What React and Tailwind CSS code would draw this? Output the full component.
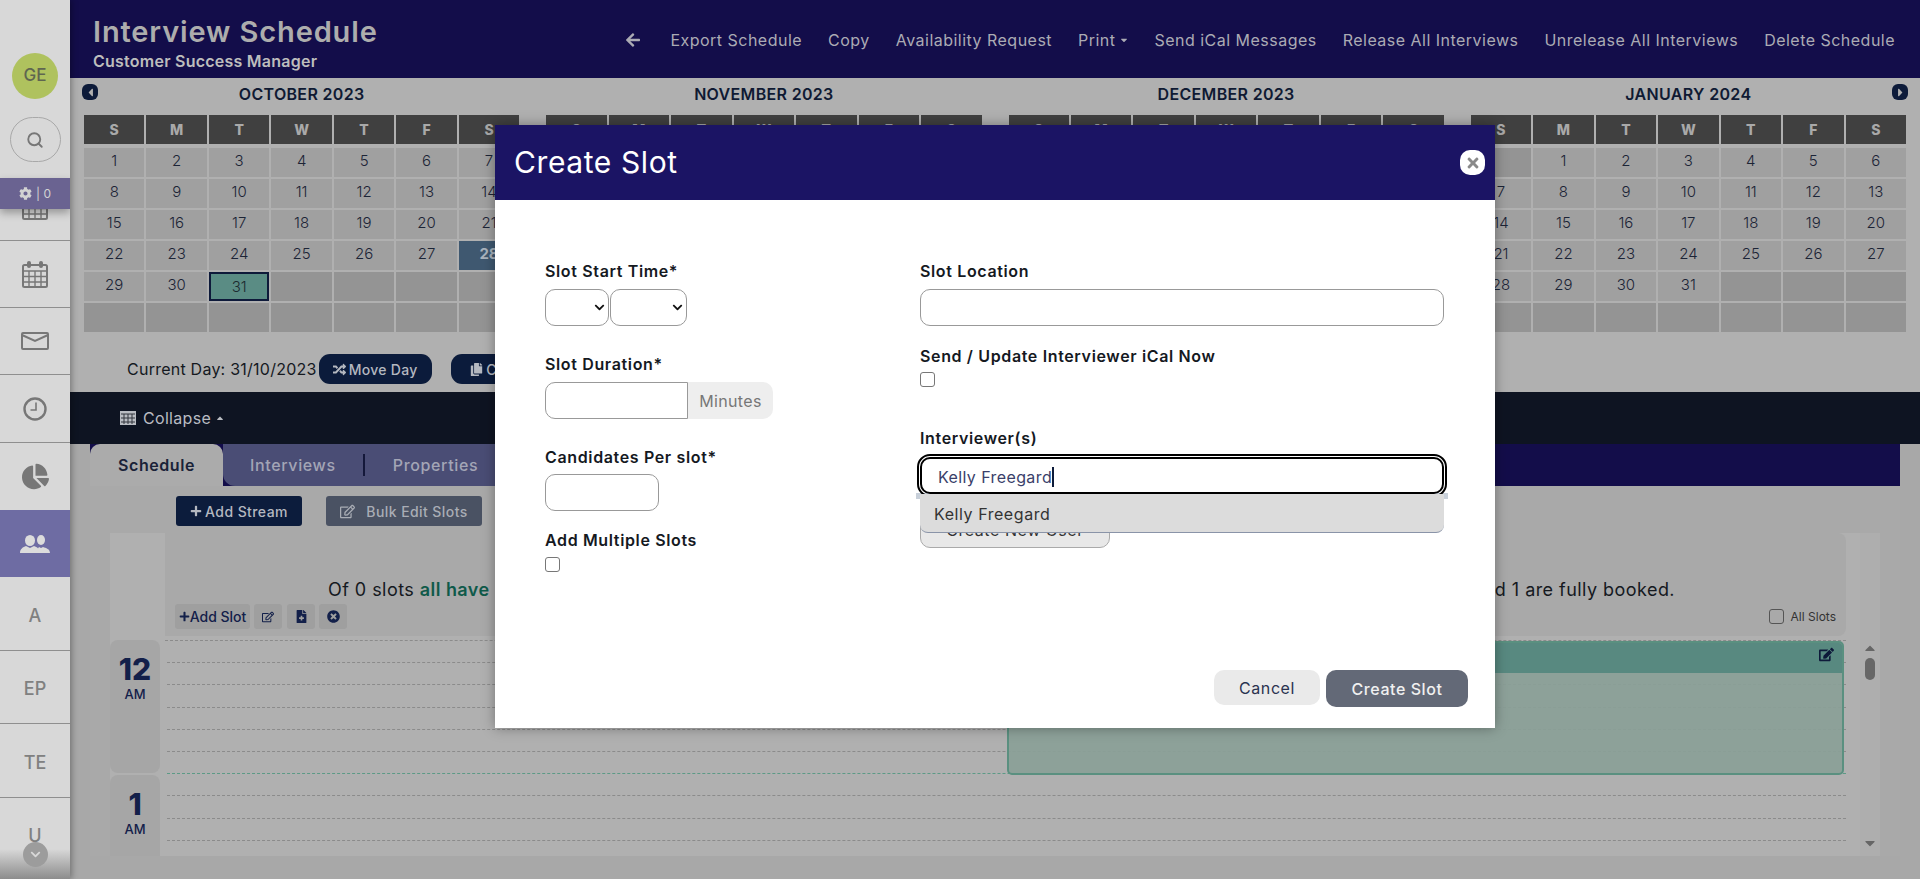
import React from "react";
import {
  FaArrowLeft,
  FaCaretDown,
  FaCaretLeft,
  FaCaretRight,
  FaCaretUp,
  FaChartPie,
  FaChevronDown,
  FaCog,
  FaCopy,
  FaEdit,
  FaFileMedical,
  FaPlus,
  FaRandom,
  FaRegEdit,
  FaTimes,
  FaTimesCircle,
} from "react-icons/fa";
import { Search } from "lucide-react";

const days = ["S", "M", "T", "W", "T", "F", "S"];

// the two middle months sit behind the modal, so their day numbers are left out
const months = [
  { title: "OCTOBER 2023", start: 0, len: 31 },
  { title: "NOVEMBER 2023", start: 3, len: 0 },
  { title: "DECEMBER 2023", start: 5, len: 0 },
  { title: "JANUARY 2024", start: 1, len: 31 },
];

const CalendarIcon = ({ className }) => (
  <svg viewBox="0 0 28 28" className={className} fill="none" stroke="#777" strokeWidth="2">
    <rect x="2" y="5" width="24" height="22" rx="1.5" fill="#d8d8d8" />
    <path d="M2 11h24M2 16.5h24M2 22h24M8 11v16M14 11v16M20 11v16" strokeWidth="1.4" />
    <rect x="6" y="1" width="4" height="7" rx="2" fill="#777" stroke="none" />
    <rect x="18" y="1" width="4" height="7" rx="2" fill="#777" stroke="none" />
  </svg>
);

const MailIcon = () => (
  <svg viewBox="0 0 28 18" className="w-[28px] h-[18px]" fill="none" stroke="#777" strokeWidth="2">
    <rect x="1" y="1" width="26" height="16" rx="1" />
    <path d="M1 3l13 6 13-6" />
  </svg>
);

const ClockIcon = () => (
  <svg viewBox="0 0 24 24" className="w-[24px] h-[24px]" fill="none" stroke="#777" strokeWidth="2.4">
    <circle cx="12" cy="12" r="10.5" />
    <path d="M13 5.5V13H7.5" strokeWidth="1.6" />
  </svg>
);

const PeopleIcon = () => (
  <svg viewBox="0 0 30 18" className="h-[18px] w-[30px]" fill="#dcdcdc">
    <ellipse cx="21" cy="5" rx="4" ry="5" />
    <path d="M17 18c0-3 1-5 2-6l2 1 2-1c3 1 7 2 7 6z" />
    <ellipse cx="10" cy="5.5" rx="5" ry="5.5" />
    <path d="M0 18c0-4 3-6 6-7l4 2 4-2c3 1 6 3 6 7z" />
  </svg>
);

const NavRow = ({ children, className = "h-[67px]" }) => (
  <div className={`flex items-center justify-center border-b border-[#8f8f8f] text-[18px] font-medium text-[#808080] ${className}`}>
    {children}
  </div>
);

const Sidebar = () => (
  <div className="relative z-10 flex h-[879px] w-[70px] shrink-0 flex-col overflow-hidden bg-[#d8d8d8] shadow-[2px_0_6px_rgba(0,0,0,0.3)]">
    <div className="flex h-[178px] flex-col items-center pt-[53px]">
      <div className="flex h-[46px] w-[46px] items-center justify-center rounded-full bg-[#afc25e] text-[17px] font-medium text-[#5f6650]">
        GE
      </div>
      <div className="mt-[18px] flex h-[45px] w-[51px] items-center justify-center rounded-full border border-[#a8a8a8]">
        <Search size={18} strokeWidth={2.5} color="#777" />
      </div>
    </div>
    <div className="relative z-10 flex h-[31px] items-center justify-center gap-[4px] bg-[#6a6391] text-[12px] text-[#d2d2d2] shadow-[0_4px_8px_rgba(0,0,0,0.3)]">
      <FaCog size={13} />
      <span>| 0</span>
    </div>
    <div className="flex h-[32px] justify-center overflow-hidden border-b border-[#8f8f8f]">
      <CalendarIcon className="-mt-[17px] h-[28px] w-[28px]" />
    </div>
    <NavRow>
      <CalendarIcon className="h-[28px] w-[28px]" />
    </NavRow>
    <NavRow>
      <MailIcon />
    </NavRow>
    <NavRow className="h-[68px]">
      <ClockIcon />
    </NavRow>
    <div className="flex h-[67px] items-center justify-center">
      <FaChartPie size={27} color="#777" />
    </div>
    <div className="flex h-[67px] items-center justify-center bg-[#6e6ca3]">
      <PeopleIcon />
    </div>
    <NavRow className="h-[74px] pt-[3px]">A</NavRow>
    <NavRow className="h-[73px] pt-[2px]">EP</NavRow>
    <NavRow className="h-[74px] pt-[3px]">TE</NavRow>
    <div className="flex h-[81px] justify-center pt-[27px] text-[18px] font-medium leading-[22px] text-[#808080]">U</div>
    <div className="absolute bottom-0 left-0 h-[30px] w-full bg-gradient-to-b from-transparent to-[#8c8c8c]" />
    <div className="absolute bottom-[12px] left-[23px] flex h-[25px] w-[25px] items-center justify-center rounded-full bg-[#9c9c9c]">
      <FaChevronDown size={11} color="#d8d8d8" />
    </div>
  </div>
);

const Header = () => (
  <div className="flex h-[78px] items-center justify-between bg-[#130d4a] pl-[23px] pr-[25px] pt-[6px]">
    <div>
      <div className="text-[29px] font-semibold leading-[36px] tracking-[0.03em] text-[#adadad]">Interview Schedule</div>
      <div className="mt-[1px] text-[16px] font-semibold leading-[20px] tracking-[0.015em] text-[#bdbdbd]">Customer Success Manager</div>
    </div>
    <div className="flex items-center gap-[26px] pb-[4px] text-[16px] tracking-[0.03em] text-[#ababb4]">
      <FaArrowLeft size={16} className="mr-[3px]" />
      <span>Export Schedule</span>
      <span>Copy</span>
      <span>Availability Request</span>
      <span className="flex items-center">
        Print
        <FaCaretDown size={10} className="ml-[3px]" />
      </span>
      <span>Send iCal Messages</span>
      <span>Release All Interviews</span>
      <span>Unrelease All Interviews</span>
      <span>Delete Schedule</span>
    </div>
  </div>
);

const Month = ({ month, index }) => {
  const cells = Array.from({ length: 42 }, (_, i) => {
    const n = i - month.start + 1;
    return n >= 1 && n <= month.len ? n : null;
  });
  return (
    <div>
      <div className="relative flex h-[37px] items-center justify-center pb-[6px] text-[16px] font-semibold tracking-[0.02em] text-[#0f1a33]">
        {index === 0 && (
          <span className="absolute left-[-2px] top-[6px] flex h-[16px] w-[16px] items-center justify-center rounded-[6px] bg-[#0d1b3a] text-[#b0b0b0]">
            <FaCaretLeft size={13} />
          </span>
        )}
        {month.title}
        {index === 3 && (
          <span className="absolute right-[-2px] top-[6px] flex h-[16px] w-[16px] items-center justify-center rounded-[6px] bg-[#0d1b3a] text-[#b0b0b0]">
            <FaCaretRight size={13} />
          </span>
        )}
      </div>
      <div className="mb-[4px] grid grid-cols-7 gap-x-[2px]">
        {days.map((d, i) => (
          <div key={i} className="flex h-[29px] items-center justify-center bg-[#404040] text-[14px] font-extrabold text-[#a9a9a9]">
            {d}
          </div>
        ))}
      </div>
      <div className="grid grid-cols-7 gap-x-[2px] gap-y-[2px]">
        {cells.map((n, i) => {
          const today = index === 0 && n === 31;
          const picked = index === 0 && n === 28;
          return (
            <div
              key={i}
              className={
                today
                  ? "flex h-[29px] items-center justify-center border-2 border-[#0e1a3a] bg-[#5a8c84] text-[15px] font-light leading-none text-[#1c2a30]"
                  : picked
                  ? "flex h-[29px] items-center justify-center bg-[#3f5870] pb-[4px] text-[15px] font-bold leading-none text-[#a9b3bd]"
                  : n
                  ? "flex h-[29px] items-center justify-center bg-[#a0a0a0] pb-[5px] text-[15px] font-light leading-none text-[#1c2436]"
                  : "h-[29px] bg-[#949494]"
              }
            >
              {n}
            </div>
          );
        })}
      </div>
    </div>
  );
};

const Calendars = () => (
  <div className="h-[314px] bg-[#b0b0b0] px-[14px]">
    <div className="grid grid-cols-4 gap-x-[27px]">
      {months.map((m, i) => (
        <Month key={m.title} month={m} index={i} />
      ))}
    </div>
    <div className="flex h-[58px] items-center pl-[43px] pt-[16px]">
      <span className="text-[16px] tracking-[0.015em] text-[#15191f]">Current Day: 31/10/2023</span>
      <button className="ml-[2px] flex h-[30px] w-[113px] items-center justify-center gap-[3px] rounded-[11px] bg-[#0b1b3b] text-[14px] font-medium tracking-[0.02em] text-[#b4b8c0]">
        <FaRandom size={13} />
        Move Day
      </button>
      <button className="ml-[19px] flex h-[30px] w-[120px] items-center justify-center gap-[3px] rounded-[11px] bg-[#0b1b3b] text-[14px] font-medium text-[#b4b8c0]">
        <FaCopy size={13} />
        Copy Day
      </button>
    </div>
  </div>
);

const Collapse = () => (
  <div className="flex h-[52px] items-center gap-[7px] bg-[#0e1422] pl-[50px] text-[16px] tracking-[0.02em] text-[#b9bcc2]">
    <svg viewBox="0 0 16 14" className="h-[14px] w-[16px]">
      <rect width="16" height="14" fill="#b9bcc2" />
      <path d="M1 3h14M1 7h14M1 11h14M4 3v10M8 3v10M12 3v10" stroke="#33363f" strokeWidth="1" />
    </svg>
    <span className="flex items-center">
      Collapse
      <FaCaretUp size={10} className="ml-[4px]" />
    </span>
  </div>
);

const Tabs = () => (
  <div className="flex h-[42px] bg-[#130d4a]">
    <div className="flex w-[133px] items-center justify-center rounded-t-[10px] bg-[#ababab] text-[16px] font-semibold tracking-[0.035em] text-[#1a2238]">
      Schedule
    </div>
    <div className="flex w-[400px] items-center rounded-bl-[12px] bg-[#4a4d75] pl-[27px] text-[16px] font-medium tracking-[0.04em] text-[#a3a5b6]">
      <span>Interviews</span>
      <span className="ml-[27px] h-[22px] w-[2px] bg-[#14183a]" />
      <span className="ml-[28px]">Properties</span>
    </div>
  </div>
);

const Toolbar = () => (
  <div className="flex h-[47px] items-start pl-[86px] pt-[10px]">
    <button className="flex h-[30px] w-[126px] items-center justify-center gap-[3px] rounded-[3px] bg-[#0c1c3c] text-[14px] font-medium tracking-[0.03em] text-[#b4b8c0]">
      <FaPlus size={12} />
      Add Stream
    </button>
    <button className="ml-[24px] flex h-[30px] w-[156px] items-center justify-center gap-[11px] rounded-[3px] bg-[#4a5263] text-[14px] font-medium tracking-[0.03em] text-[#a9adb5]">
      <FaRegEdit size={15} />
      Bulk Edit Slots
    </button>
  </div>
);

const lineKeys = [0, 1, 2, 3, 4, 5, 6, 7, 8, 9];

const Grid = () => (
  <div className="ml-[20px] flex h-[323px] w-[1770px] bg-[#b0b0b0]">
    <div className="flex w-[55px] shrink-0 flex-col">
      <div className="h-[107px]" />
      <div className="flex h-[133px] w-[50px] flex-col items-center rounded-[8px] bg-[#a6a6a6] pt-[14px] text-[#13204a]">
        <span className="text-[30px] font-extrabold leading-[30px]">12</span>
        <span className="mt-[2px] text-[13px] font-medium leading-[16px]">AM</span>
      </div>
      <div className="mt-[2px] flex w-[50px] flex-1 flex-col items-center rounded-t-[8px] bg-[#a6a6a6] pt-[14px] text-[#13204a]">
        <span className="text-[30px] font-extrabold leading-[30px]">1</span>
        <span className="mt-[2px] text-[13px] font-medium leading-[16px]">AM</span>
      </div>
    </div>
    <div className="flex w-[1681px] shrink-0 flex-col">
      <div className="h-[103px] shrink-0 rounded-br-[8px] rounded-tr-[8px] bg-[#a9a9a9]">
        <div className="flex justify-between pl-[163px] pr-[171px] pt-[44px] text-[18px] leading-[26px] tracking-[0.025em] text-[#15191f]">
          <span>
            Of 0 slots <b className="font-semibold text-[#0f5a4a]">all have</b>
          </span>
          <span>and 1 are fully booked.</span>
        </div>
        <div className="mt-[1px] flex h-[25px] items-center pl-[10px]">
          <button className="flex h-[25px] w-[75px] items-center justify-center rounded-[3px] bg-[#9f9f9f] text-[14px] font-medium text-[#13204a]">
            <FaPlus size={11} />
            Add Slot
          </button>
          <button className="ml-[4px] flex h-[25px] w-[28px] items-center justify-center rounded-[3px] bg-[#9f9f9f] text-[#13204a]">
            <FaRegEdit size={12} />
          </button>
          <button className="ml-[5px] flex h-[25px] w-[28px] items-center justify-center rounded-[3px] bg-[#9f9f9f] text-[#13204a]">
            <FaFileMedical size={13} />
          </button>
          <button className="ml-[4px] flex h-[25px] w-[28px] items-center justify-center rounded-[3px] bg-[#9f9f9f] text-[#13204a]">
            <FaTimesCircle size={13} />
          </button>
          <span className="ml-auto mr-[10px] flex items-center gap-[7px] text-[12px] text-[#333]">
            <span className="h-[15px] w-[15px] rounded-[3px] border border-[#555]" />
            All Slots
          </span>
        </div>
      </div>
      <div className="relative mt-[4px] min-h-0 flex-1 overflow-hidden border-t border-dashed border-[#8b8b8b] pl-[2px]">
        {lineKeys.map((k) => (
          <div
            key={k}
            className={
              k === 5
                ? "h-[22.2px] border-b border-dashed border-[#5c9a86]"
                : "h-[22.2px] border-b border-dashed border-[#8b8b8b]"
            }
          />
        ))}
        <div className="absolute left-[842px] top-0 h-[134px] w-[837px] overflow-hidden rounded-[5px] border-2 border-[#5a9080] bg-[#8aa097]/90">
          <div className="flex h-[30px] items-start justify-end bg-[#588980] pr-[8px] pt-[4px] text-[#0e1a3a]">
            <FaEdit size={15} />
          </div>
        </div>
      </div>
    </div>
    <div className="w-[14px] shrink-0" />
    <div className="flex w-[20px] shrink-0 flex-col items-center bg-[#aeaeae] pt-[107px]">
      <FaCaretUp size={16} color="#666" />
      <span className="mt-[2px] h-[22px] w-[10px] rounded-full bg-[#666]" />
      <FaCaretDown size={16} color="#666" className="mt-[155px]" />
    </div>
  </div>
);

const Label = ({ children }) => (
  <div className="h-[24px] text-[16px] font-semibold leading-[24px] tracking-[0.04em] text-[#15191f]">{children}</div>
);

const Field = ({ className }) => (
  <input className={`h-[37px] rounded-[10px] border border-[#999] bg-white ${className}`} />
);

const Check = () => <div className="h-[15px] w-[15px] rounded-[3px] border border-[#777]" />;

const SelectBox = ({ className }) => (
  <div className={`flex h-[37px] items-center justify-end rounded-[10px] border border-[#999] pr-[3px] ${className}`}>
    <FaChevronDown size={11} color="#111" />
  </div>
);

const Modal = () => (
  <div className="absolute left-[495px] top-[125px] z-20 flex h-[603px] w-[1000px] flex-col bg-white shadow-[0_0_12px_rgba(0,0,0,0.35)]">
    <div className="flex h-[75px] shrink-0 items-center justify-between bg-[#1b1464] pl-[19px] pr-[10px]">
      <span className="text-[30px] tracking-[0.02em] text-white">Create Slot</span>
      <span className="flex h-[25px] w-[25px] items-center justify-center rounded-[10px] bg-white">
        <FaTimes size={16} color="#8a8a8a" />
      </span>
    </div>
    <div className="flex flex-1">
      <div className="w-[425px] shrink-0 pl-[50px] pt-[59px]">
        <Label>Slot Start Time*</Label>
        <div className="mt-[6px] flex gap-[1px]">
          <SelectBox className="w-[64px]" />
          <SelectBox className="w-[77px]" />
        </div>
        <div className="mt-[26px]">
          <Label>Slot Duration*</Label>
        </div>
        <div className="mt-[6px] flex">
          <input className="h-[37px] w-[143px] rounded-l-[10px] border border-[#999] bg-white" />
          <span className="flex h-[37px] w-[85px] items-center justify-center rounded-r-[10px] bg-[#eeeeee] text-[16px] tracking-[0.02em] text-[#777]">
            Minutes
          </span>
        </div>
        <div className="mt-[26px]">
          <Label>Candidates Per slot*</Label>
        </div>
        <Field className="mt-[5px] block w-[114px]" />
        <div className="mt-[17px]">
          <Label>Add Multiple Slots</Label>
        </div>
        <div className="mt-[5px]">
          <Check />
        </div>
      </div>
      <div className="w-[524px] shrink-0 pt-[59px]">
        <Label>Slot Location</Label>
        <Field className="mt-[6px] block w-full" />
        <div className="mt-[18px]">
          <Label>Send / Update Interviewer iCal Now</Label>
        </div>
        <div className="mt-[4px]">
          <Check />
        </div>
        <div className="mt-[39px]">
          <Label>Interviewer(s)</Label>
        </div>
        <div className="relative mt-[7px]">
          <div className="absolute left-[-4px] right-[-4px] top-[36px] h-[6px] bg-[#c8d0da]" />
          <div className="relative flex h-[37px] items-center rounded-[10px] border-2 border-black bg-white pl-[16px] pt-[2px] text-[16px] tracking-[0.025em] text-[#3a3f6a] outline-2 outline-offset-1 outline-black">
            Kelly Freegard
            <span className="h-[20px] w-[1.5px] bg-[#0d1b3a]" />
          </div>
          <div className="absolute left-0 right-0 top-[37px] z-10 flex h-[39px] items-center rounded-b-[8px] border-b border-[#8a94a8] bg-[#dcdcdc] pl-[14px] pt-[1px] text-[16px] tracking-[0.035em] text-[#333]">
            Kelly Freegard
          </div>
          <button className="mt-[17px] flex h-[37px] w-[190px] items-center justify-center rounded-[10px] border border-[#aaa] bg-[#e8e8e8] text-[16px] tracking-[0.035em] text-[#333]">
            Create New User
          </button>
        </div>
      </div>
    </div>
    <div className="flex shrink-0 items-start justify-end gap-[6px] pb-[21px] pr-[27px]">
      <button className="h-[35px] w-[106px] rounded-[10px] bg-[#eaeaea] text-[16px] tracking-[0.035em] text-[#2a3350]">Cancel</button>
      <button className="h-[37px] w-[142px] rounded-[10px] bg-[#636977] text-[16px] font-medium tracking-[0.035em] text-[#f0f0f0]">Create Slot</button>
    </div>
  </div>
);

export default function App() {
  return (
    <div className="relative flex h-[879px] w-[1920px] overflow-hidden bg-[#a8a8a8] [font-family:Inter,'Noto_Sans',sans-serif]">
      <Sidebar />
      <div className="flex min-w-0 flex-1 flex-col">
        <Header />
        <Calendars />
        <Collapse />
        <div className="ml-[20px] w-[1810px]">
          <Tabs />
          <div className="bg-[#a9a9a9]">
            <Toolbar />
            <Grid />
          </div>
        </div>
      </div>
      <Modal />
    </div>
  );
}
